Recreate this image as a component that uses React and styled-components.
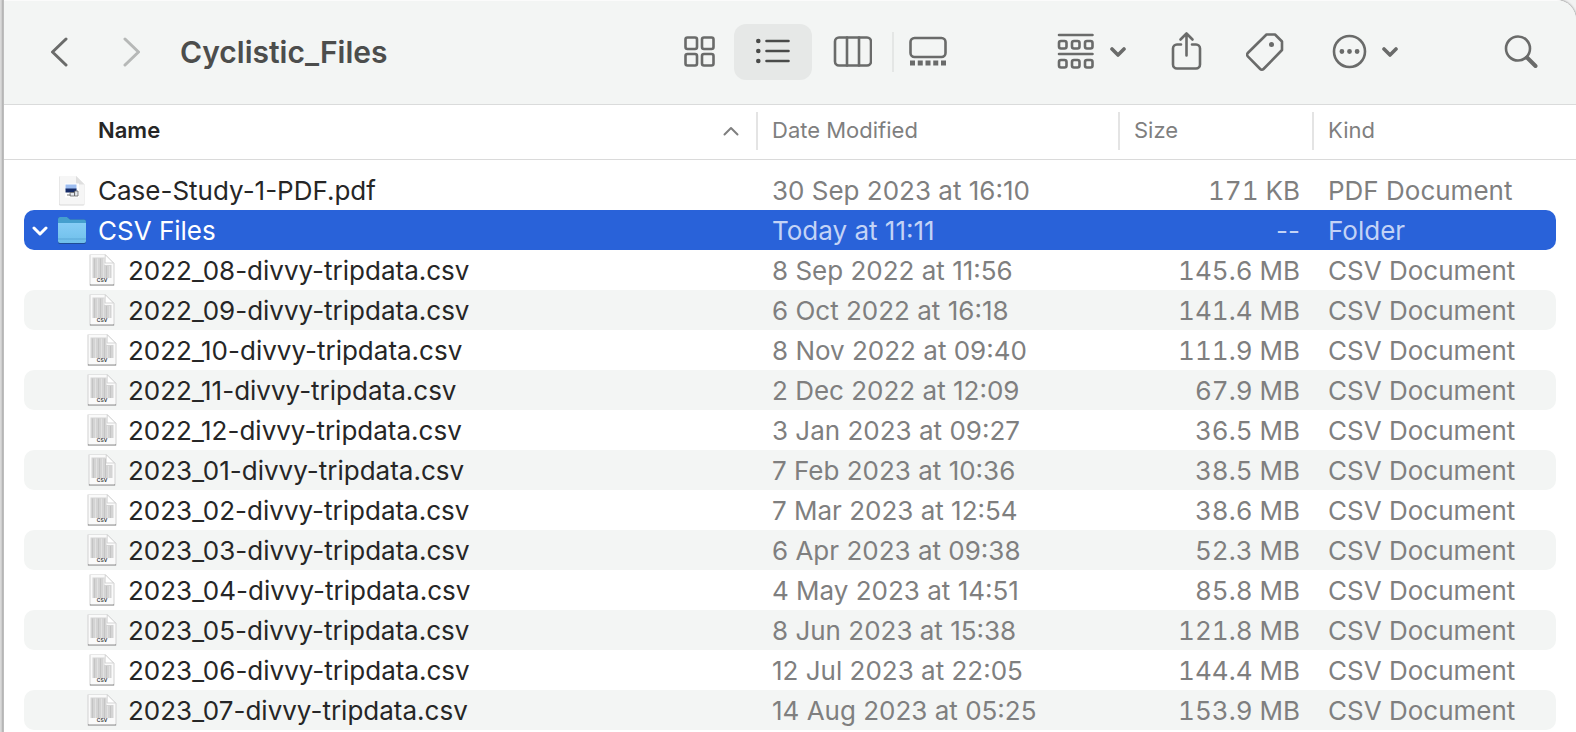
import React from "react";
import styled, { createGlobalStyle, css } from "styled-components";

const GlobalStyle = createGlobalStyle`
  * { box-sizing: border-box; }
  body {
    margin: 0;
    background: #f2f2f2;
    font-family: Inter, "Liberation Sans", sans-serif;
    overflow: hidden;
  }
`;

const Desktop = styled.div`
  border-left: 3px solid #dcdcdc;
  min-height: 100vh;
  display: flex;
`;

const Window = styled.main`
  flex: 1;
  min-width: 0;
  background: #fff;
  border-left: 1px solid #bdbdbd;
  border-top-right-radius: 20px;
  box-shadow: 0 0 2px 1px #a8a8a8;
  overflow: hidden;
`;

const Toolbar = styled.header`
  display: flex;
  align-items: center;
  height: 105px;
  padding: 0 38px 2px 42px;
  background: #f3f5f4;
  border-top: 1px solid #fbfbfb;
  border-bottom: 1px solid #dadbdb;
  color: #6a6b6a;
`;

const IconButton = styled.button`
  display: flex;
  align-items: center;
  justify-content: center;
  flex: none;
  width: ${(p) => p.$width}px;
  height: 56px;
  padding: 0;
  border: 0;
  border-radius: 12px;
  background: ${(p) => (p.$active ? "#e6e8e7" : "transparent")};
  color: ${(p) => (p.$active ? "#4a4b4a" : p.$dim ? "#b6b8b7" : "inherit")};
`;

const History = styled.nav`
  display: flex;
  gap: 46px;
`;

const Title = styled.h1`
  flex: 1;
  min-width: 0;
  margin: 0 0 0 36px;
  font-size: 30px;
  line-height: 40px;
  font-weight: 600;
  color: #4c4d4c;
  white-space: nowrap;
`;

const ViewSwitch = styled.div`
  display: flex;
  align-items: center;
`;

const Divider = styled.span`
  width: 2px;
  height: 40px;
  background: #e4e6e5;
`;

const Actions = styled.div`
  display: flex;
  align-items: center;
  gap: 44px;
  margin: 0 104px 0 94px;
`;

const Icon = styled.svg`
  display: block;
  flex: none;
  fill: none;
  stroke: ${(p) => (p.$filled ? "none" : "currentColor")};
  stroke-width: ${(p) => p.$weight || 2.6};
  stroke-linecap: round;
  stroke-linejoin: round;
`;

const Solid = styled.path`
  fill: currentColor;
  stroke: none;
`;

const Table = styled.table`
  display: block;
`;

const Head = styled.thead`
  display: block;
  border-bottom: 1px solid #dadada;
  padding: 7px 20px 9px;
  font-size: 22px;
  line-height: 36px;
`;

const Body = styled.tbody`
  display: block;
  padding: 10px 20px 0;
  font-size: 26px;
  line-height: 40px;
`;

const columns = css`
  display: grid;
  grid-template-columns: minmax(0, 1fr) 362px 194px 244px;
`;

const HeadRow = styled.tr`
  ${columns}
`;

const Row = styled.tr`
  ${columns}
  grid-template-rows: 40px;
  border-radius: 10px;
  background: ${(p) => (p.$selected ? "#2962d9" : p.$striped ? "#f3f5f4" : "transparent")};
  color: ${(p) => (p.$selected ? "#c3d3f6" : "#7f7f7f")};
`;

const HeadCell = styled.th`
  height: 38px;
  padding: 0 0 0 14px;
  border-left: 2px solid #e4e4e4;
  color: #7f7f7f;
  font-weight: 400;
  text-align: left;
`;

const NameHead = styled(HeadCell)`
  display: flex;
  align-items: center;
  justify-content: space-between;
  height: 36px;
  padding: 0 17px 0 74px;
  border-left: 0;
  color: #262626;
  font-weight: 600;
`;

const NameCell = styled.td`
  display: flex;
  align-items: center;
  padding: 0 0 0 ${(p) => (p.$nested ? 38 : 8)}px;
  color: ${(p) => (p.$selected ? "#fff" : "#262626")};
  white-space: nowrap;
`;

const Disclosure = styled.span`
  display: flex;
  width: 24px;
  padding-top: 2px;
`;

const FileName = styled.span`
  margin-left: 10px;
  padding-top: 2px;
`;

const Cell = styled.td`
  padding: 1px 0 0 16px;
  white-space: nowrap;
`;

const SizeCell = styled(Cell)`
  padding: 1px 12px 0 0;
  text-align: right;
  font-variant-numeric: ${(p) => (p.$empty ? "normal" : "tabular-nums")};
`;

const Chevron = ({ weight = 3.6 }) => (
  <Icon width="16" height="12" viewBox="0 0 16 12" $weight={weight} aria-hidden="true">
    <path d="M2 3l6 6 6-6" />
  </Icon>
);

const SortArrow = () => (
  <Icon width="16" height="12" viewBox="0 0 16 12" $weight={2} color="#7f7f7f" aria-hidden="true">
    <path d="M1.500 10.500L8 4l6.500 6.500" />
  </Icon>
);

const PdfIcon = () => (
  <Icon width="32" height="40" viewBox="0 0 32 40" $filled aria-hidden="true">
    <path d="M4.500 6h15.500l8.500 8.500V34a1.500 1.500 0 0 1-1.500 1.500H4.500A1.500 1.500 0 0 1 3 34V7.500A1.500 1.500 0 0 1 4.500 6z" fill="#d8d8d8" />
    <path d="M4.500 6h15.500l8.500 8.500V33.500a1 1 0 0 1-1 1h-23a1 1 0 0 1-1-1V7a1 1 0 0 1 1-1z" fill="#f6f6f6" />
    <path d="M20 6l8.500 8.500H21.500a1.500 1.500 0 0 1-1.500-1.500z" fill="#dfdfdf" />
    <path d="M9 13.500h14v14H9z" fill="#fff" />
    <path d="M9.500 14.500h11v5h-11z" fill="#9dbdf0" />
    <path d="M9.500 18.500h11v4h-11z" fill="#152a66" />
    <path d="M11 24h4v2h-4z" fill="#b9b9b9" />
    <path d="M14.500 22.500h4v3.500h-4zM19 21h3v5h-3z" fill="#e4e8ee" stroke="#666" strokeWidth="0.800" />
  </Icon>
);

const FolderIcon = () => (
  <Icon width="32" height="40" viewBox="0 0 32 40" $filled aria-hidden="true">
    <defs>
      <linearGradient id="folder-front" x1="0" y1="0" x2="0" y2="1">
        <stop offset="0" stopColor="#86cdf6" />
        <stop offset="1" stopColor="#6fbfea" />
      </linearGradient>
    </defs>
    <path d="M2 9a2 2 0 0 1 2-2h7l3 2.500h14a2 2 0 0 1 2 2V32a2 2 0 0 1-2 2H4a2 2 0 0 1-2-2z" fill="#1f4c96" />
    <path d="M2 9a2 2 0 0 1 2-2h7l3 2.500h14a2 2 0 0 1 2 2V20H2z" fill="#459fce" />
    <path d="M2 13h28v18a2 2 0 0 1-2 2H4a2 2 0 0 1-2-2z" fill="url(#folder-front)" />
    <path d="M2 28.500h28v1H2z" fill="#5ba6d6" />
  </Icon>
);

const Fiber = styled.path`
  stroke: ${(p) => (p.$light ? "#e2e2e2" : "#c4c4c4")};
  stroke-width: 1;
  stroke-linecap: butt;
`;

const CsvIcon = ({ inset }) => {
  const left = 1.5 + inset;
  const right = 30.5 - inset;
  const stripes = [0, 3, 6, 9, 12, 15, 18].map((n) => left + 4 + n).filter((x) => x < right - 3);
  return (
    <Icon width="32" height="40" viewBox="0 0 32 40" $filled aria-hidden="true">
      <path d={`M${left - 1} 4.500H${right - 8}l9 9V35.500H${left - 1}z`} fill="#d2d2d2" />
      <path d={`M${left - 0.5} 34H${right + 0.5}V35.500H${left - 0.5}z`} fill="#8e8e8e" />
      <path d={`M${left} 5H${right - 8}l8 8V34.500H${left}z`} fill="#fafafa" />
      <path d={`M${left + 2} 7.500H${right - 9}V15H${right - 2}V28H${left + 2}z`} fill="#d4d4d4" />
      {stripes.map((x, i) => (
        <Fiber key={x} $light={i % 2 === 1} d={`M${x} ${x > right - 9 ? 16 : 8.5}V28`} />
      ))}
      <path d={`M${right - 8} 5l8 8H${right - 8}z`} fill="#fff" stroke="#c4c4c4" strokeWidth="0.700" />
      <text x="16" y="32" textAnchor="middle" fontSize="5" fontWeight="600" fill="#333">CSV</text>
    </Icon>
  );
};

const files = [
  { name: "2022_08-divvy-tripdata.csv", date: "8 Sep 2022 at 11:56", size: "145.6 MB", inset: 3 },
  { name: "2022_09-divvy-tripdata.csv", date: "6 Oct 2022 at 16:18", size: "141.4 MB", inset: 3 },
  { name: "2022_10-divvy-tripdata.csv", date: "8 Nov 2022 at 09:40", size: "111.9 MB", inset: 1 },
  { name: "2022_11-divvy-tripdata.csv", date: "2 Dec 2022 at 12:09", size: "67.9 MB", inset: 1 },
  { name: "2022_12-divvy-tripdata.csv", date: "3 Jan 2023 at 09:27", size: "36.5 MB", inset: 1 },
  { name: "2023_01-divvy-tripdata.csv", date: "7 Feb 2023 at 10:36", size: "38.5 MB", inset: 2 },
  { name: "2023_02-divvy-tripdata.csv", date: "7 Mar 2023 at 12:54", size: "38.6 MB", inset: 1 },
  { name: "2023_03-divvy-tripdata.csv", date: "6 Apr 2023 at 09:38", size: "52.3 MB", inset: 1 },
  { name: "2023_04-divvy-tripdata.csv", date: "4 May 2023 at 14:51", size: "85.8 MB", inset: 3 },
  { name: "2023_05-divvy-tripdata.csv", date: "8 Jun 2023 at 15:38", size: "121.8 MB", inset: 1 },
  { name: "2023_06-divvy-tripdata.csv", date: "12 Jul 2023 at 22:05", size: "144.4 MB", inset: 3 },
  { name: "2023_07-divvy-tripdata.csv", date: "14 Aug 2023 at 05:25", size: "153.9 MB", inset: 1 },
];

export default function App() {
  return (
    <Desktop>
      <GlobalStyle />
      <Window>
        <Toolbar>
          <History aria-label="History">
            <IconButton $width={26} aria-label="Back">
              <Icon width="18" height="32" viewBox="0 0 18 32" $weight={3}>
                <path d="M16 3L2.500 16 16 29" />
              </Icon>
            </IconButton>
            <IconButton $width={26} $dim aria-label="Forward">
              <Icon width="18" height="32" viewBox="0 0 18 32" $weight={3}>
                <path d="M3 3l13.500 13L3 29" />
              </Icon>
            </IconButton>
          </History>
          <Title>Cyclistic_Files</Title>
          <ViewSwitch>
            <IconButton $width={68} aria-label="Icon view">
              <Icon width="32" height="32" viewBox="0 0 32 32">
                <rect x="1.500" y="1.500" width="11.500" height="11.500" rx="2" />
                <rect x="18" y="1.500" width="11.500" height="11.500" rx="2" />
                <rect x="1.500" y="18" width="11.500" height="11.500" rx="2" />
                <rect x="18" y="18" width="11.500" height="11.500" rx="2" />
              </Icon>
            </IconButton>
            <IconButton $width={78} $active aria-label="List view">
              <Icon width="34" height="28" viewBox="0 0 34 28">
                <path d="M10.500 3h22M10.500 13h22M10.500 23h22" />
                <Solid d="M0 3a2.300 2.300 0 1 0 4.600 0a2.300 2.300 0 1 0-4.600 0M0 13a2.300 2.300 0 1 0 4.600 0a2.300 2.300 0 1 0-4.600 0M0 23a2.300 2.300 0 1 0 4.600 0a2.300 2.300 0 1 0-4.600 0" />
              </Icon>
            </IconButton>
            <IconButton $width={80} aria-label="Column view">
              <Icon width="40" height="32" viewBox="0 0 40 32">
                <rect x="3" y="1.500" width="36" height="28" rx="4" />
                <path d="M15 1.500v28M27 1.500v28" />
              </Icon>
            </IconButton>
            <Divider />
            <IconButton $width={68} aria-label="Gallery view">
              <Icon width="38" height="32" viewBox="0 0 38 32">
                <rect x="1.500" y="2" width="35" height="19" rx="4" />
                <Solid d="M1 24.500h5v5H1zM8.750 24.500h5v5h-5zM16.500 24.500h5v5h-5zM24.250 24.500h5v5h-5zM32 24.500h5v5h-5z" />
              </Icon>
            </IconButton>
          </ViewSwitch>
          <Actions>
            <IconButton $width={70} aria-label="Group">
              <Icon width="54" height="38" viewBox="0 0 54 38">
                <path d="M3 2h33.500M3 21h33.500" />
                <rect x="3" y="8" width="7.500" height="7.500" rx="2" />
                <rect x="16" y="8" width="7.500" height="7.500" rx="2" />
                <rect x="29" y="8" width="7.500" height="7.500" rx="2" />
                <rect x="3" y="27" width="7.500" height="7.500" rx="2" />
                <rect x="16" y="27" width="7.500" height="7.500" rx="2" />
                <rect x="29" y="27" width="7.500" height="7.500" rx="2" />
              </Icon>
              <Chevron />
            </IconButton>
            <IconButton $width={32} aria-label="Share">
              <Icon width="32" height="42" viewBox="0 0 32 42">
                <path d="M11 13.500H7a4 4 0 0 0-4 4V33.500a4 4 0 0 0 4 4h19a4 4 0 0 0 4-4V17.500a4 4 0 0 0-4-4H22" />
                <path d="M16.500 24.500V3M10.500 8.500L16.500 2.500l6 6" />
              </Icon>
            </IconButton>
            <IconButton $width={38} aria-label="Tags">
              <Icon width="38" height="38" viewBox="0 0 38 38">
                <path d="M20.500 1.500h8.500L36 8.500V17L17.500 36a2.300 2.300 0 0 1-3.300 0L1.800 23.300a2.300 2.300 0 0 1 0-3.300z" />
                <Solid d="M23 11.500a2.500 2.500 0 1 0 5 0a2.500 2.500 0 1 0-5 0" />
              </Icon>
            </IconButton>
            <IconButton $width={72} aria-label="More actions">
              <Icon width="52" height="36" viewBox="0 0 52 36">
                <circle cx="19.500" cy="17.500" r="15.500" />
                <Solid d="M9.500 17.500a2.400 2.400 0 1 0 4.800 0a2.400 2.400 0 1 0-4.800 0M17.100 17.500a2.400 2.400 0 1 0 4.800 0a2.400 2.400 0 1 0-4.800 0M24.700 17.500a2.400 2.400 0 1 0 4.800 0a2.400 2.400 0 1 0-4.800 0" />
              </Icon>
              <Chevron />
            </IconButton>
          </Actions>
          <IconButton $width={34} aria-label="Search">
            <Icon width="34" height="34" viewBox="0 0 34 34">
              <circle cx="14" cy="13.500" r="12" />
              <path d="M23 22.500l8.500 8.500" strokeWidth="4" />
            </Icon>
          </IconButton>
        </Toolbar>
        <Table>
          <Head>
            <HeadRow>
              <NameHead scope="col">
                Name
                <SortArrow />
              </NameHead>
              <HeadCell scope="col">Date Modified</HeadCell>
              <HeadCell scope="col">Size</HeadCell>
              <HeadCell scope="col">Kind</HeadCell>
            </HeadRow>
          </Head>
          <Body>
            <Row>
              <NameCell>
                <Disclosure />
                <PdfIcon />
                <FileName>Case-Study-1-PDF.pdf</FileName>
              </NameCell>
              <Cell>30 Sep 2023 at 16:10</Cell>
              <SizeCell>171 KB</SizeCell>
              <Cell>PDF Document</Cell>
            </Row>
            <Row $selected>
              <NameCell $selected>
                <Disclosure>
                  <Chevron weight={3} />
                </Disclosure>
                <FolderIcon />
                <FileName>CSV Files</FileName>
              </NameCell>
              <Cell>Today at 11:11</Cell>
              <SizeCell $empty>--</SizeCell>
              <Cell>Folder</Cell>
            </Row>
            {files.map((file, i) => (
              <Row key={file.name} $striped={i % 2 === 1}>
                <NameCell $nested>
                  <Disclosure />
                  <CsvIcon inset={file.inset} />
                  <FileName>{file.name}</FileName>
                </NameCell>
                <Cell>{file.date}</Cell>
                <SizeCell>{file.size}</SizeCell>
                <Cell>CSV Document</Cell>
              </Row>
            ))}
          </Body>
        </Table>
      </Window>
    </Desktop>
  );
}
